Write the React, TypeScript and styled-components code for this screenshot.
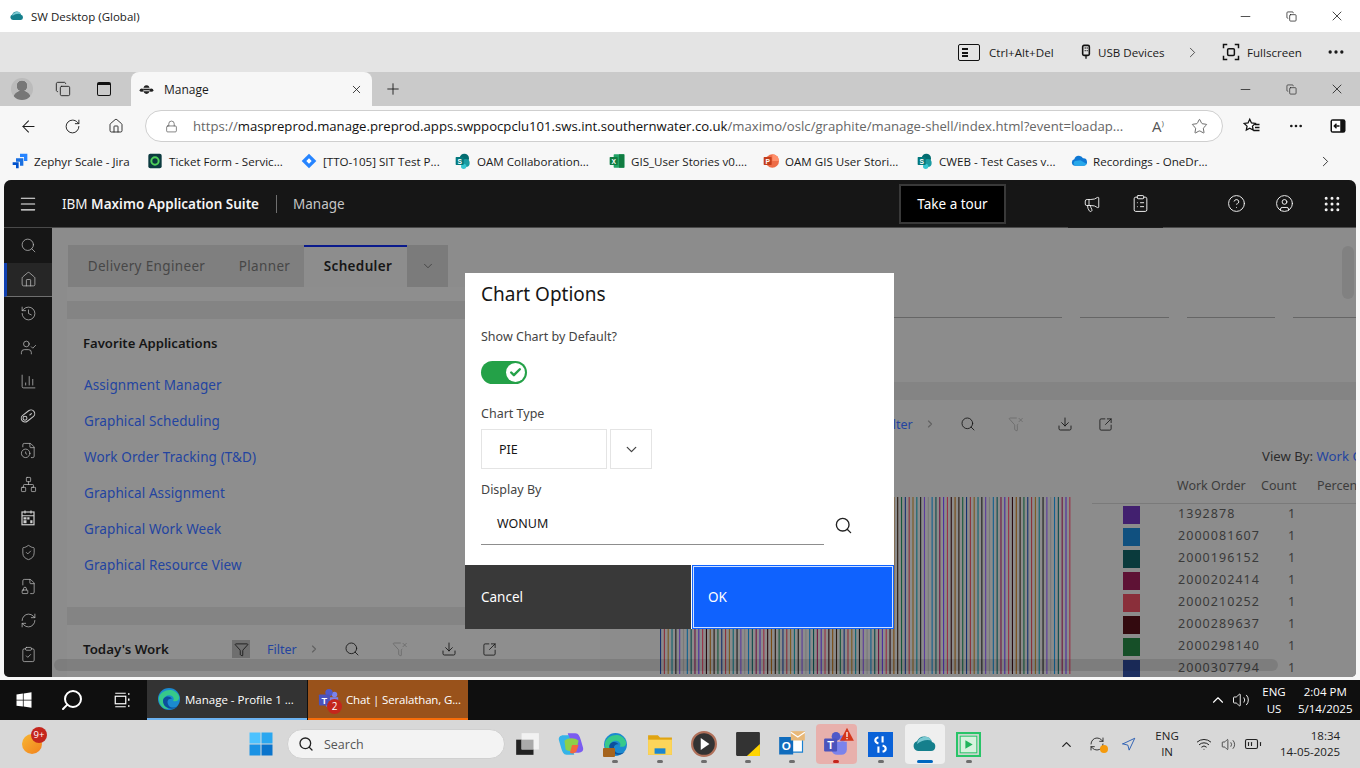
import type { ReactNode } from "react";
import styled, { createGlobalStyle } from "styled-components";
import {
	ArrowLeft,
	BatteryMedium,
	ChartColumn,
	Check,
	ChevronDown,
	ChevronRight,
	ChevronUp,
	CircleHelp,
	CircleUser,
	ClipboardCheck,
	ClipboardList,
	Copy,
	Download,
	Ellipsis,
	FileClock,
	FileLock2,
	Funnel,
	FunnelX,
	Grip,
	History,
	House,
	Lock,
	Megaphone,
	Menu,
	Minus,
	Navigation,
	Network,
	Plus,
	RefreshCw,
	RotateCw,
	Search,
	ShieldCheck,
	SquareArrowOutUpRight,
	Star,
	UserCheck,
	Volume2,
	Wifi,
	X,
} from "lucide-react";

const GlobalStyle = createGlobalStyle`
	html, body {
		margin: 0;
		padding: 0;
		background: #fff;
	}
	* {
		box-sizing: border-box;
	}
`;

const plex = `"Noto Sans", "Open Sans", sans-serif`;
const segoe = `"Open Sans", "Noto Sans", sans-serif`;

const favorites = [
	"Assignment Manager",
	"Graphical Scheduling",
	"Work Order Tracking (T&D)",
	"Graphical Assignment",
	"Graphical Work Week",
	"Graphical Resource View",
];

const legend = [
	{ id: "1392878", color: "#42206f" },
	{ id: "2000081607", color: "#10507f" },
	{ id: "2000196152", color: "#0a3a3c" },
	{ id: "2000202414", color: "#5e1235" },
	{ id: "2000210252", color: "#8a2f3a" },
	{ id: "2000289637", color: "#330a0f" },
	{ id: "2000298140", color: "#164f28" },
	{ id: "2000307794", color: "#1c2e60" },
];

const barColors = ["#2a1a10", "#14573a", "#16306e", "#8a2f3a", "#7a5a20", "#0e6470", "#1b1b1b", "#5b3a9c", "#7a7a7a", "#11608f", "#0a4a4a", "#6e1640", "#4a2aa0", "#9a2f45", "#2a0a0f", "#7a4a10"];

function Logo({ children, size = 16 }: { children: ReactNode; size?: number }) {
	return (
		<svg width={size} height={size} viewBox="0 0 24 24">
			{children}
		</svg>
	);
}

const ZephyrIcon = () => (
	<Logo>
		<path d="M12 1h11v11h-5V6h-6z" fill="#2684ff" />
		<path d="M6 8h11v11h-5v-6H6z" fill="#1a6fe0" />
		<path d="M1 14h9v9H6v-5H1z" fill="#0052cc" />
	</Logo>
);

const TicketIcon = () => (
	<Logo>
		<rect x="2" y="1" width="20" height="22" rx="3" fill="#0b3a3f" />
		<circle cx="12" cy="12" r="5.5" fill="none" stroke="#4fd05a" strokeWidth="3" />
	</Logo>
);

const JiraIcon = () => (
	<Logo>
		<path d="M12 1l11 11-11 11L1 12z" fill="#2684ff" />
		<path d="M12 8l4 4-4 4-4-4z" fill="#fff" />
	</Logo>
);

const SharePointIcon = () => (
	<Logo>
		<circle cx="14" cy="8" r="7" fill="#036c70" />
		<circle cx="16" cy="15" r="6" fill="#1a9ba1" />
		<circle cx="13" cy="20" r="4" fill="#37c6d0" />
		<rect x="1" y="6" width="12" height="12" rx="1" fill="#03787c" />
		<text x="7" y="16" fontSize="10" fontWeight="700" fill="#fff" textAnchor="middle" fontFamily="Liberation Sans">
			S
		</text>
	</Logo>
);

const ExcelIcon = () => (
	<Logo>
		<rect x="7" y="2" width="16" height="20" rx="1" fill="#21a366" />
		<rect x="15" y="2" width="8" height="20" fill="#107c41" />
		<rect x="1" y="6" width="12" height="12" rx="1" fill="#107c41" />
		<text x="7" y="16" fontSize="10" fontWeight="700" fill="#fff" textAnchor="middle" fontFamily="Liberation Sans">
			X
		</text>
	</Logo>
);

const PowerPointIcon = () => (
	<Logo>
		<circle cx="14" cy="12" r="10" fill="#ed6c47" />
		<path d="M14 2a10 10 0 0110 10H14z" fill="#ff8f6b" />
		<rect x="1" y="6" width="12" height="12" rx="1" fill="#c43e1c" />
		<text x="7" y="16" fontSize="10" fontWeight="700" fill="#fff" textAnchor="middle" fontFamily="Liberation Sans">
			P
		</text>
	</Logo>
);

const OneDriveIcon = () => (
	<Logo>
		<path d="M6 19a5 5 0 01-1-9.8A7 7 0 0118 8a5.5 5.5 0 011 11z" fill="#0f78d4" />
		<path d="M6 19a4 4 0 010-7l8-1 9 5a3.5 3.5 0 01-4 3z" fill="#28a8ea" />
	</Logo>
);

const CloudIcon = ({ size = 16 }: { size?: number }) => (
	<Logo size={size}>
		<path d="M5 19a5 5 0 01-1-9.7A8 8 0 0119 10a4.6 4.6 0 01-1 9z" fill="#157f8c" />
		<path d="M4 12a8 8 0 0115-3c-4-2-10-1-15 3z" fill="#7bc9d2" />
	</Logo>
);

const BeeIcon = () => (
	<Logo size={15}>
		<ellipse cx="12" cy="12" rx="5" ry="7" fill="#222" />
		<ellipse cx="4.5" cy="13" rx="3.5" ry="2.5" fill="#222" />
		<ellipse cx="19.5" cy="13" rx="3.5" ry="2.5" fill="#222" />
		<path d="M7 10h10M7 14h10" stroke="#f5f5f5" strokeWidth="1.5" />
	</Logo>
);

const UsbPlugIcon = () => (
	<Logo size={16}>
		<rect x="7" y="2" width="10" height="15" rx="2" fill="none" stroke="#111" strokeWidth="2.4" />
		<path d="M10 6h1.5M13 6h1.5M10 10h1.5M13 10h1.5M12 17v5" stroke="#111" strokeWidth="2" />
	</Logo>
);

const FullscreenIcon = () => (
	<Logo size={18}>
		<path d="M2 7V2h5M17 2h5v5M22 17v5h-5M7 22H2v-5" fill="none" stroke="#111" strokeWidth="2" />
		<rect x="7.5" y="7.5" width="9" height="9" rx="1.5" fill="none" stroke="#111" strokeWidth="2" />
	</Logo>
);

const FavoritesIcon = () => (
	<Logo size={18}>
		<path d="M9 3l2.3 5 5.2.6-3.9 3.6 1 5.3L9 15l-4.6 2.5 1-5.3L1.5 8.6 6.7 8z" fill="#fff" stroke="#111" strokeWidth="1.7" />
		<path d="M16 10h6M16 14h6M14 18h8" stroke="#111" strokeWidth="1.7" />
	</Logo>
);

const SplitIcon = () => (
	<Logo size={18}>
		<rect x="2" y="3" width="20" height="18" rx="3" fill="#111" />
		<rect x="4" y="5" width="11" height="14" fill="#fff" />
		<path d="M14 12H7M10 9l-3 3 3 3" fill="none" stroke="#111" strokeWidth="1.8" />
	</Logo>
);

const WorkTagIcon = () => (
	<Logo size={18}>
		<rect x="2" y="7" width="20" height="10" rx="5" transform="rotate(-38 12 12)" fill="none" stroke="#c6c6c6" strokeWidth="1.4" />
		<circle cx="8" cy="15" r="2.6" fill="none" stroke="#c6c6c6" strokeWidth="1.4" />
		<path d="M14 11l3-2.4" stroke="#c6c6c6" strokeWidth="1.4" />
	</Logo>
);

const ScheduleIcon = () => (
	<Logo size={18}>
		<rect x="4" y="4" width="16" height="17" fill="none" stroke="#d0d0d0" strokeWidth="1.6" />
		<path d="M8 2v4M16 2v4M4 9h16" stroke="#d0d0d0" strokeWidth="1.6" />
		<path d="M6 11h4v3H6zM11 11h3v3h-3zM15 15h3v4h-3zM6 15h4v4H6z" fill="#d0d0d0" />
	</Logo>
);

const TaskViewIcon = () => (
	<Logo size={18}>
		<path d="M3 3h14M3 21h14" stroke="#fff" strokeWidth="1.6" />
		<rect x="3" y="7" width="14" height="10" fill="none" stroke="#fff" strokeWidth="1.6" />
		<path d="M20 3h2v2h-2zM20 10h2v3h-2zM20 19h2v2h-2z" fill="#fff" />
	</Logo>
);

const WindowsTenIcon = () => (
	<Logo size={18}>
		<path d="M2 4.5l8.5-1.2v8.2H2zM11.5 3.2L22 1.8v9.7H11.5zM2 12.5h8.5v8.2L2 19.5zM11.5 12.5H22v9.7l-10.5-1.4z" fill="#fff" />
	</Logo>
);

const WindowsElevenIcon = () => (
	<Logo size={24}>
		<rect x="0.5" y="0.5" width="11" height="11" fill="#4cc2ff" />
		<rect x="12.5" y="0.5" width="11" height="11" fill="#2aa7f0" />
		<rect x="0.5" y="12.5" width="11" height="11" fill="#1a92e4" />
		<rect x="12.5" y="12.5" width="11" height="11" fill="#0a74cc" />
	</Logo>
);

const EdgeIcon = ({ size = 24 }: { size?: number }) => (
	<Logo size={size}>
		<circle cx="12" cy="12" r="11" fill="#1b8ad0" />
		<path d="M2 10C4 3 17-1 22 9c1 4-2 6-6 5 3-4-4-8-8-4-3 3-2 9 4 12C6 23 1 17 2 10z" fill="#36c98a" />
		<path d="M6 14c0-5 7-6 9-2-4-1-6 3-3 7 2 2 6 2 9 0-4 5-15 3-15-5z" fill="#0c4f9c" />
	</Logo>
);

const TeamsIcon = ({ size = 24 }: { size?: number }) => (
	<Logo size={size}>
		<circle cx="18" cy="7" r="3" fill="#7b83eb" />
		<circle cx="12" cy="5" r="4" fill="#5059c9" />
		<path d="M8 10h14v7a5 5 0 01-5 5h-4a5 5 0 01-5-5z" fill="#7b83eb" />
		<rect x="1" y="7" width="12" height="12" rx="1" fill="#4b53bc" />
		<text x="7" y="17" fontSize="10" fontWeight="700" fill="#fff" textAnchor="middle" fontFamily="Liberation Sans">
			T
		</text>
	</Logo>
);

type PinnedApp = { key: string; node: ReactNode; state?: "alert" | "active"; dot?: boolean };

const getPinnedApps = (): PinnedApp[] => [
	{
		key: "desktops",
		node: (
			<Logo size={26}>
				<rect x="2" y="8" width="16" height="14" fill="#222" />
				<rect x="7" y="2" width="16" height="15" fill="#f2f2f2" />
				<rect x="7" y="8" width="11" height="9" fill="#aaa" />
			</Logo>
		),
	},
	{
		key: "copilot",
		node: (
			<Logo size={26}>
				<path d="M9 2h7c3 0 4 3 5 6l2 7c1 3-1 5-4 5h-5z" fill="#7b5cf0" />
				<path d="M15 22H8c-3 0-4-3-5-6L1 9c-1-3 1-5 4-5h5z" fill="#35b4e8" />
				<path d="M6 9c4-3 9-3 13 0l-2 8c-3 2-7 2-10 0z" fill="#8cd04a" />
				<path d="M13 13h6l-2 6c-2 2-4 2-6 1z" fill="#f2683c" />
			</Logo>
		),
	},
	{
		key: "edge",
		node: (
			<Wrap>
				<EdgeIcon size={25} />
				<Briefcase />
			</Wrap>
		),
		dot: true,
	},
	{
		key: "files",
		node: (
			<Logo size={26}>
				<path d="M1 4h9l2 2h11v16H1z" fill="#e0a412" />
				<rect x="1" y="8" width="22" height="14" fill="#fcd55a" />
				<rect x="7" y="16" width="10" height="5" fill="#1a86d0" />
			</Logo>
		),
		dot: true,
	},
	{
		key: "player",
		node: (
			<Logo size={26}>
				<circle cx="12" cy="12" r="11" fill="#333" stroke="#b0705a" strokeWidth="2" />
				<path d="M9 6.5l8 5.5-8 5.5z" fill="#fff" />
			</Logo>
		),
		dot: true,
	},
	{
		key: "notes",
		node: (
			<Logo size={26}>
				<rect x="1" y="1" width="22" height="22" rx="1" fill="#333" />
				<path d="M11 23l12-11v11z" fill="#ffd400" />
			</Logo>
		),
		dot: true,
	},
	{
		key: "outlook",
		node: (
			<Logo size={28}>
				<path d="M8 7h13v12H8z" fill="#fff" stroke="#1a80d0" />
				<rect x="1" y="6" width="12" height="15" fill="#0f6cbd" />
				<text x="7" y="17" fontSize="10" fontWeight="700" fill="#fff" textAnchor="middle" fontFamily="Liberation Sans">
					O
				</text>
				<path d="M11 1h12v8H11z" fill="#e8b878" />
				<path d="M11 2l6 4 6-4" fill="none" stroke="#fff" />
			</Logo>
		),
		dot: true,
	},
	{
		key: "teams",
		node: (
			<Wrap>
				<TeamsIcon size={26} />
				<AlertMark viewBox="0 0 24 24" width={16} height={15}>
					<path d="M12 1l11 21H1z" fill="#d4361a" />
					<path d="M11 8h2v8h-2zM11 17.5h2v2h-2z" fill="#fff" />
				</AlertMark>
			</Wrap>
		),
		state: "alert",
	},
	{
		key: "sw",
		node: (
			<Logo size={25}>
				<rect width="24" height="24" fill="#0a62d8" />
				<path d="M10 5c-4 1-4 5 0 6M14 19c4-1 4-5 0-6M14 4v6M10 14v6" fill="none" stroke="#fff" strokeWidth="2" />
			</Logo>
		),
		dot: true,
	},
	{ key: "cloud", node: <CloudIcon size={24} />, state: "active" },
	{
		key: "viewer",
		node: (
			<Logo size={25}>
				<rect x="1" y="1" width="22" height="22" fill="none" stroke="#28c468" strokeWidth="2" />
				<rect x="4" y="4" width="16" height="16" fill="#d6f2de" stroke="#28c468" />
				<path d="M9 8l7 4-7 4z" fill="#20b45c" />
			</Logo>
		),
		dot: true,
	},
];

function CardToolbar({ title, pad }: { title?: string; pad: number }) {
	return (
		<ToolRow $pad={pad}>
			<CardTitle>{title}</CardTitle>
			<FilterBox>
				<Funnel size={15} strokeWidth={1.3} color="#111" />
			</FilterBox>
			<FilterLink>Filter</FilterLink>
			<ToolSlot $w={34}>
				<ChevronRight size={12} strokeWidth={2.2} color="#616161" />
			</ToolSlot>
			<ToolSlot $w={42}>
				<Search size={16} strokeWidth={1.3} color="#161616" />
			</ToolSlot>
			<ToolSlot $w={54}>
				<FunnelX size={16} strokeWidth={1.1} color="#666" />
			</ToolSlot>
			<ToolSlot $w={44}>
				<Download size={16} strokeWidth={1.3} color="#161616" />
			</ToolSlot>
			<ToolSlot $w={36}>
				<SquareArrowOutUpRight size={15} strokeWidth={1.3} color="#161616" />
			</ToolSlot>
		</ToolRow>
	);
}

export default function App() {
	return (
		<Screen>
			<GlobalStyle />
			<TitleBar>
				<TitleLeft>
					<CloudIcon size={14} />
					<span>SW Desktop (Global)</span>
				</TitleLeft>
				<WindowButtons>
					<WindowButton><Minus size={15} strokeWidth={1.2} /></WindowButton>
					<WindowButton><Copy size={11} strokeWidth={1.6} /></WindowButton>
					<WindowButton><X size={16} strokeWidth={1.2} /></WindowButton>
				</WindowButtons>
			</TitleBar>

			<RemoteBar>
				<RemoteItem $w={120} $gap={9}>
					<KeyboardBox>
						<KeyDots />
					</KeyboardBox>
					<span>Ctrl+Alt+Del</span>
				</RemoteItem>
				<RemoteItem $w={96} $gap={4}>
					<UsbPlugIcon />
					<span>USB Devices</span>
				</RemoteItem>
				<RemoteChevron>
					<ChevronRight size={17} strokeWidth={1} />
				</RemoteChevron>
				<RemoteItem $w={80} $gap={7}>
					<FullscreenIcon />
					<span>Fullscreen</span>
				</RemoteItem>
				<RemoteMore>
					<Ellipsis size={20} strokeWidth={2} />
				</RemoteMore>
			</RemoteBar>

			<TabStrip>
				<StripIcon $w={44}>
					<Avatar />
				</StripIcon>
				<StripIcon $w={38}>
					<Copy size={16} strokeWidth={1.3} />
				</StripIcon>
				<StripIcon $w={44}>
					<TabBoxIcon />
				</StripIcon>
				<ActiveTab>
					<BeeIcon />
					<TabLabel>Manage</TabLabel>
					<X size={13} strokeWidth={1.5} />
				</ActiveTab>
				<NewTab>
					<Plus size={18} strokeWidth={1.2} />
				</NewTab>
				<WindowButtons>
					<WindowButton><Minus size={15} strokeWidth={1.2} /></WindowButton>
					<WindowButton><Copy size={11} strokeWidth={1.4} /></WindowButton>
					<WindowButton><X size={16} strokeWidth={1.2} /></WindowButton>
				</WindowButtons>
			</TabStrip>

			<AddressBar>
				<NavButton $w={44}><ArrowLeft size={19} strokeWidth={1.3} /></NavButton>
				<NavButton $w={44}><RotateCw size={17} strokeWidth={1.3} /></NavButton>
				<NavButton $w={44}><House size={16} strokeWidth={1.3} /></NavButton>
				<UrlPill>
					<Lock size={13} strokeWidth={1.2} color="#444" />
					<UrlText>
						<Muted>https://</Muted>maspreprod.manage.preprod.apps.swppocpclu101.sws.int.southernwater.co.uk<Muted>/maximo/oslc/graphite/manage-shell/index.html?event=loadap...</Muted>
					</UrlText>
					<ReadAloud>A<sup>)</sup></ReadAloud>
					<PillStar>
						<Star size={17} strokeWidth={1.1} color="#444" />
					</PillStar>
				</UrlPill>
				<EndTools>
					<NavButton $w={44}><FavoritesIcon /></NavButton>
					<NavButton $w={44}><Ellipsis size={16} strokeWidth={2} /></NavButton>
					<NavButton $w={40}><SplitIcon /></NavButton>
				</EndTools>
			</AddressBar>

			<FavBar>
				<FavItem $w={135}><ZephyrIcon /><FavText>Zephyr Scale - Jira</FavText></FavItem>
				<FavItem $w={154}><TicketIcon /><FavText>Ticket Form - Servic...</FavText></FavItem>
				<FavItem $w={154}><JiraIcon /><FavText>[TTO-105] SIT Test P...</FavText></FavItem>
				<FavItem $w={154}><SharePointIcon /><FavText>OAM Collaboration...</FavText></FavItem>
				<FavItem $w={154}><ExcelIcon /><FavText>GIS_User Stories v0....</FavText></FavItem>
				<FavItem $w={154}><PowerPointIcon /><FavText>OAM GIS User Stori...</FavText></FavItem>
				<FavItem $w={154}><SharePointIcon /><FavText>CWEB - Test Cases v...</FavText></FavItem>
				<FavItem $w={246}><OneDriveIcon /><FavText>Recordings - OneDr...</FavText></FavItem>
				<ChevronRight size={17} strokeWidth={1.2} />
			</FavBar>

			<WindowFrame>
				<MaximoWindow>
					<Header>
						<HeaderMenu>
							<Menu size={20} strokeWidth={1.3} />
						</HeaderMenu>
						<Brand>
							IBM <b>Maximo Application Suite</b>
						</Brand>
						<BrandDivider />
						<AppName>Manage</AppName>
						<HeaderSpacer />
						<TourButton>Take a tour</TourButton>
						<HeaderIcon $first><Megaphone size={18} strokeWidth={1.2} /></HeaderIcon>
						<HeaderIcon><ClipboardList size={19} strokeWidth={1.2} /></HeaderIcon>
						<HeaderIcon $gap><CircleHelp size={19} strokeWidth={1.2} /></HeaderIcon>
						<HeaderIcon><CircleUser size={19} strokeWidth={1.2} /></HeaderIcon>
						<HeaderIcon><Grip size={20} strokeWidth={1.6} /></HeaderIcon>
						<HeaderLip />
					</Header>

					<Body>
						<SideNav>
							<NavItem><Search size={17} strokeWidth={1} /></NavItem>
							<NavItem $active><House size={17} strokeWidth={1} /></NavItem>
							<NavItem><History size={17} strokeWidth={1} /></NavItem>
							<NavItem><UserCheck size={17} strokeWidth={1} /></NavItem>
							<NavItem><ChartColumn size={17} strokeWidth={1} /></NavItem>
							<NavItem><WorkTagIcon /></NavItem>
							<NavItem><FileClock size={17} strokeWidth={1} /></NavItem>
							<NavItem><Network size={17} strokeWidth={1} /></NavItem>
							<NavItem><ScheduleIcon /></NavItem>
							<NavItem><ShieldCheck size={17} strokeWidth={1} /></NavItem>
							<NavItem><FileLock2 size={17} strokeWidth={1} /></NavItem>
							<NavItem><RefreshCw size={17} strokeWidth={1} /></NavItem>
							<NavItem><ClipboardCheck size={17} strokeWidth={1} /></NavItem>
						</SideNav>

						<Content>
							<LeftColumn>
								<RoleTabs>
									<RoleTab $w={156}>Delivery Engineer</RoleTab>
									<RoleTab $w={80}>Planner</RoleTab>
									<RoleTab $w={103} $active>Scheduler</RoleTab>
									<RoleMore>
										<ChevronDown size={14} strokeWidth={1} />
									</RoleMore>
								</RoleTabs>
								<TabFoot />
								<Band />
								<Card $h={288}>
									<FavHeading>Favorite Applications</FavHeading>
									{favorites.map((name) => (
										<FavLink key={name}>{name}</FavLink>
									))}
								</Card>
								<Band />
								<Card $h={70}>
									<CardToolbar title="Today's Work" pad={0} />
								</Card>
							</LeftColumn>

							<RightColumn>
								<FilterLines>
									<FilterLine $w={447} />
									<FilterLine $w={89} />
									<FilterLine $w={88} />
									<FilterLine $w={63} />
								</FilterLines>
								<Band />
								<WideCard>
									<CardToolbar pad={84} />
									<ViewBy>
										View By: <a>Work Order</a>
									</ViewBy>
									<ChartRow>
										<svg width={411} height={177}>
											{Array.from({ length: 108 }, (_, i) => (
												<rect key={i} x={i * 3.825} y={0} width={1.1} height={177} fill={barColors[(i + 2) % barColors.length]} />
											))}
										</svg>
										<Legend>
											<LegendHead>
												<HeadCell $w={84}>Work Order</HeadCell>
												<HeadCell $w={56}>Count</HeadCell>
												<HeadCell $w={60}>Percentage</HeadCell>
											</LegendHead>
											{legend.map((row) => (
												<LegendRow key={row.id}>
													<Swatch style={{ background: row.color }} />
													<LegendId>{row.id}</LegendId>
													<LegendCount>1</LegendCount>
												</LegendRow>
											))}
										</Legend>
									</ChartRow>
								</WideCard>
							</RightColumn>

							<VScroll />
							<HScroll />
						</Content>
					</Body>

					<Modal>
						<ModalBody>
							<ModalTitle>Chart Options</ModalTitle>
							<FieldLabel $top={23}>Show Chart by Default?</FieldLabel>
							<Toggle>
								<ToggleKnob>
									<Check size={13} strokeWidth={4.5} color="#24a148" />
								</ToggleKnob>
							</Toggle>
							<FieldLabel $top={22}>Chart Type</FieldLabel>
							<SelectRow>
								<SelectValue>PIE</SelectValue>
								<SelectArrow>
									<ChevronDown size={17} strokeWidth={1.8} color="#444" />
								</SelectArrow>
							</SelectRow>
							<FieldLabel $top={13}>Display By</FieldLabel>
							<LookupRow>
								<LookupInput>WONUM</LookupInput>
								<LookupIcon size={19} strokeWidth={1.7} color="#222" />
							</LookupRow>
						</ModalBody>
						<ModalFooter>
							<CancelButton>Cancel</CancelButton>
							<OkButton>OK</OkButton>
						</ModalFooter>
					</Modal>
				</MaximoWindow>
			</WindowFrame>

			<RemoteTaskbar>
				<TaskSlot $w={48}><WindowsTenIcon /></TaskSlot>
				<TaskSlot $w={48}><Search size={24} strokeWidth={2} color="#fff" style={{ transform: "scaleX(-1)" }} /></TaskSlot>
				<TaskSlot $w={51}><TaskViewIcon /></TaskSlot>
				<TaskApp $bg="#333333" $line="#6cb2f0">
					<EdgeIcon size={24} />
					<span>Manage - Profile 1 ...</span>
				</TaskApp>
				<TaskApp $bg="#99521b" $line="#f76d0a">
					<Wrap>
						<TeamsIcon size={22} />
						<TeamsBadge>2</TeamsBadge>
					</Wrap>
					<TaskChatLabel>Chat | Seralathan, G...</TaskChatLabel>
				</TaskApp>
				<RemoteTray>
					<ChevronUp size={18} strokeWidth={1.5} />
					<Volume2 size={18} strokeWidth={1.2} />
					<TrayLang>ENG<br />US</TrayLang>
					<TrayClock>2:04 PM<br />5/14/2025</TrayClock>
				</RemoteTray>
			</RemoteTaskbar>

			<LocalTaskbar>
				<WidgetSlot>
					<WidgetDot />
					<WidgetBadge>9+</WidgetBadge>
				</WidgetSlot>
				<WindowsElevenIcon />
				<SearchPill>
					<Search size={16} strokeWidth={2} color="#222" />
					<span>Search</span>
				</SearchPill>
				<PinnedRow>
					{getPinnedApps().map((app) => (
						<PinnedSlot key={app.key} $state={app.state}>
							{app.node}
							{app.dot && <PinDot />}
							{app.state === "alert" && <PinDot $red />}
							{app.state === "active" && <ActiveBar />}
						</PinnedSlot>
					))}
				</PinnedRow>
				<LocalTray>
					<TrayIcon $w={28}><ChevronUp size={15} strokeWidth={2} color="#222" /></TrayIcon>
					<TrayIcon $w={34}>
						<Wrap>
							<RefreshCw size={16} strokeWidth={1.3} color="#222" />
							<SyncDot />
						</Wrap>
					</TrayIcon>
					<TrayIcon $w={28}><Navigation size={15} strokeWidth={1.4} color="#1d55b0" /></TrayIcon>
					<LocalLang>ENG<br />IN</LocalLang>
					<TrayIcon $w={24}><Wifi size={16} strokeWidth={1.5} color="#222" /></TrayIcon>
					<TrayIcon $w={24}><Volume2 size={15} strokeWidth={1.2} color="#222" /></TrayIcon>
					<TrayIcon $w={26}><BatteryMedium size={18} strokeWidth={1.5} color="#222" /></TrayIcon>
					<LocalClock>18:34<br />14-05-2025</LocalClock>
				</LocalTray>
			</LocalTaskbar>
		</Screen>
	);
}

const Screen = styled.div`
	width: 1360px;
	height: 768px;
	overflow: hidden;
	display: flex;
	flex-direction: column;
	background: #fff;
	font-family: ${segoe};
	font-size: 12px;
	color: #1a1a1a;
`;

const TitleBar = styled.div`
	height: 32px;
	display: flex;
	align-items: center;
	justify-content: space-between;
	background: #fff;
`;

const TitleLeft = styled.div`
	display: flex;
	align-items: center;
	gap: 7px;
	padding-left: 10px;
	font-size: 11.5px;
`;

const WindowButtons = styled.div`
	display: flex;
	margin-left: auto;
`;

const WindowButton = styled.div`
	width: 46px;
	height: 32px;
	display: flex;
	align-items: center;
	justify-content: center;
`;

const RemoteBar = styled.div`
	height: 40px;
	padding-left: 958px;
	display: flex;
	align-items: center;
	background: #e4e4e4;
	font-size: 11.6px;
`;

const RemoteItem = styled.div<{ $w: number; $gap: number }>`
	width: ${({ $w }) => $w}px;
	flex: none;
	display: flex;
	align-items: center;
	gap: ${({ $gap }) => $gap}px;
	white-space: nowrap;
`;

const KeyboardBox = styled.div`
	width: 22px;
	height: 17px;
	border: 1.5px solid #111;
	border-radius: 2px;
	padding: 3px;
	flex: none;
`;

const KeyDots = styled.div`
	width: 6px;
	height: 9px;
	background: repeating-linear-gradient(#111 0 2px, transparent 2px 3.5px);
`;

const RemoteChevron = styled.div`
	width: 48px;
	flex: none;
	padding-left: 10px;
	display: flex;
	align-items: center;
`;

const RemoteMore = styled.div`
	margin-left: 24px;
	display: flex;
`;

const TabStrip = styled.div`
	height: 34px;
	display: flex;
	align-items: center;
	background: #cacaca;
`;

const StripIcon = styled.div<{ $w: number }>`
	width: ${({ $w }) => $w}px;
	display: flex;
	justify-content: center;
`;

const Avatar = styled.div`
	width: 22px;
	height: 22px;
	border-radius: 50%;
	background:
		radial-gradient(circle at 50% 36%, #777 0 5px, transparent 5.5px),
		radial-gradient(circle at 50% 100%, #777 0 9px, transparent 9.5px),
		#bbb;
`;

const TabBoxIcon = styled.div`
	width: 14px;
	height: 14px;
	border: 1.5px solid #111;
	border-top-width: 3px;
	border-radius: 2px;
`;

const ActiveTab = styled.div`
	width: 241px;
	height: 34px;
	margin-left: 5px;
	padding: 0 9px 0 8px;
	display: flex;
	align-items: center;
	gap: 10px;
	background: #f7f7f7;
	border-radius: 8px 8px 0 0;
`;

const TabLabel = styled.span`
	flex: 1;
	font-size: 12px;
`;

const NewTab = styled.div`
	margin-left: 12px;
	display: flex;
`;

const AddressBar = styled.div`
	height: 40px;
	padding-left: 6px;
	display: flex;
	align-items: center;
	background: #f7f7f7;
`;

const NavButton = styled.div<{ $w: number }>`
	width: ${({ $w }) => $w}px;
	flex: none;
	display: flex;
	justify-content: center;
	align-items: center;
`;

const UrlPill = styled.div`
	width: 1078px;
	height: 32px;
	flex: none;
	margin-left: 7px;
	padding: 0 14px 0 19px;
	display: flex;
	align-items: center;
	background: #fff;
	border: 1px solid #cfcfcf;
	border-radius: 16px;
`;

const UrlText = styled.div`
	margin-left: 15px;
	width: 933px;
	flex: none;
	white-space: nowrap;
	overflow: hidden;
	font-size: 13.15px;
	color: #111;
`;

const Muted = styled.span`
	color: #666;
`;

const ReadAloud = styled.div`
	width: 46px;
	padding-left: 26px;
	flex: none;
	font-size: 15px;
	color: #555;
	sup {
		font-size: 8px;
	}
`;

const PillStar = styled.div`
	margin-left: 19px;
	display: flex;
`;

const EndTools = styled.div`
	display: flex;
	margin-left: 7px;
`;

const FavBar = styled.div`
	height: 30px;
	padding-left: 12px;
	display: flex;
	align-items: center;
	background: #f7f7f7;
`;

const FavItem = styled.div<{ $w: number }>`
	width: ${({ $w }) => $w}px;
	flex: none;
	display: flex;
	align-items: center;
	gap: 6px;
`;

const FavText = styled.span`
	font-size: 11.6px;
	white-space: nowrap;
`;

const WindowFrame = styled.div`
	height: 504px;
	padding: 4px 4px 3px;
	background: #f7f7f7;
`;

const MaximoWindow = styled.div`
	position: relative;
	height: 497px;
	display: flex;
	flex-direction: column;
	overflow: hidden;
	border-radius: 7px 7px 5px 5px;
	background: #8c8c8c;
	font-family: ${plex};
`;

const Header = styled.header`
	position: relative;
	height: 48px;
	flex: none;
	display: flex;
	align-items: center;
	background: #161616;
	border-bottom: 1px solid #4a4a4a;
	color: #f4f4f4;
`;

const HeaderLip = styled.div`
	position: absolute;
	left: 1064px;
	bottom: -1px;
	width: 95px;
	height: 1px;
	background: #1f1f1f;
`;

const HeaderMenu = styled.div`
	width: 48px;
	display: flex;
	justify-content: center;
`;

const Brand = styled.div`
	margin-left: 10px;
	font-size: 13.5px;
	white-space: nowrap;
	b {
		font-weight: 600;
	}
`;

const BrandDivider = styled.div`
	width: 1px;
	height: 18px;
	margin: 0 16px 0 17px;
	background: #6f6f6f;
`;

const AppName = styled.div`
	font-size: 13.5px;
	color: #c6c6c6;
`;

const HeaderSpacer = styled.div`
	flex: 1;
`;

const TourButton = styled.div`
	width: 107px;
	height: 40px;
	display: flex;
	align-items: center;
	justify-content: center;
	background: #000;
	border: 2px solid #393939;
	font-size: 13.5px;
	color: #fff;
`;

const HeaderIcon = styled.div<{ $first?: boolean; $gap?: boolean }>`
	width: 48px;
	display: flex;
	justify-content: center;
	margin-left: ${({ $first, $gap }) => ($first ? 62 : $gap ? 48 : 0)}px;
`;

const Body = styled.div`
	flex: 1;
	min-height: 0;
	display: flex;
`;

const SideNav = styled.nav`
	width: 48px;
	flex: none;
	padding-top: 1px;
	background: #161616;
	color: #c6c6c6;
`;

const NavItem = styled.div<{ $active?: boolean }>`
	height: 34.1px;
	display: flex;
	align-items: center;
	justify-content: center;
	background: ${({ $active }) => ($active ? "#262626" : "transparent")};
	border-left: 3px solid ${({ $active }) => ($active ? "#0f3fb0" : "transparent")};
	border-bottom: 1px solid ${({ $active }) => ($active ? "#6f6f6f" : "transparent")};
	padding-right: 3px;
`;

const Content = styled.main`
	position: relative;
	flex: 1;
	min-width: 0;
	padding-left: 15px;
	display: flex;
	gap: 15px;
	overflow: hidden;
	background: #8c8c8c;
`;

const LeftColumn = styled.div`
	width: 533px;
	flex: none;
	padding-top: 17px;
`;

const RoleTabs = styled.div`
	width: 380px;
	height: 42px;
	margin-left: 1px;
	display: flex;
	background: #7f7f7f;
	font-size: 13.5px;
	letter-spacing: 0.35px;
	color: #474747;
`;

const RoleTab = styled.div<{ $w: number; $active?: boolean }>`
	width: ${({ $w }) => $w}px;
	padding-bottom: 3px;
	padding-left: ${({ $active }) => ($active ? 5 : 1)}px;
	display: flex;
	align-items: center;
	justify-content: center;
	background: ${({ $active }) => ($active ? "#8d8d8d" : "transparent")};
	border-top: 2px solid ${({ $active }) => ($active ? "#0a1a8c" : "transparent")};
	color: ${({ $active }) => ($active ? "#161616" : "inherit")};
	font-weight: ${({ $active }) => ($active ? 600 : 400)};
`;

const RoleMore = styled.div`
	width: 41px;
	display: flex;
	align-items: center;
	justify-content: center;
	background: #7b7b7b;
	color: #222;
`;

const TabFoot = styled.div`
	height: 14px;
	background: #8e8e8e;
`;

const Band = styled.div`
	height: 18px;
	background: #848484;
`;

const Card = styled.section<{ $h: number }>`
	height: ${({ $h }) => $h}px;
	padding: 0 16px;
	background: #8e8e8e;
`;

const FavHeading = styled.h3`
	margin: 0;
	padding: 15px 0 15px;
	font-size: 13.1px;
	line-height: 18px;
	font-weight: 600;
	color: #161616;
`;

const FavLink = styled.a`
	display: block;
	height: 36px;
	padding-left: 1px;
	line-height: 36px;
	font-size: 13.5px;
	letter-spacing: 0.1px;
	color: #2344a0;
`;

const ToolRow = styled.div<{ $pad: number }>`
	height: 48px;
	margin-left: ${({ $pad }) => $pad}px;
	display: flex;
	align-items: center;
`;

const CardTitle = styled.div`
	width: 149px;
	font-size: 13.3px;
	font-weight: 600;
	color: #161616;
`;

const FilterBox = styled.div`
	width: 18px;
	height: 18px;
	display: flex;
	align-items: center;
	justify-content: center;
	background: #6f6f6f;
`;

const FilterLink = styled.span`
	margin-left: 17px;
	width: 30px;
	font-size: 12.5px;
	color: #2344a0;
`;

const ToolSlot = styled.div<{ $w: number }>`
	width: ${({ $w }) => $w}px;
	display: flex;
	justify-content: center;
`;

const RightColumn = styled.div`
	flex: 1;
	min-width: 0;
`;

const FilterLines = styled.div`
	height: 154px;
	padding-top: 89px;
	display: flex;
	gap: 18px;
`;

const FilterLine = styled.div<{ $w: number }>`
	width: ${({ $w }) => $w}px;
	height: 1px;
	flex: none;
	background: #666;
`;

const WideCard = styled.section`
	height: 300px;
	overflow: hidden;
	background: #8c8c8c;
`;

const ViewBy = styled.div`
	height: 22px;
	padding-left: 647px;
	font-size: 13.2px;
	line-height: 16px;
	white-space: nowrap;
	color: #2c2c2c;
	a {
		color: #2344a0;
	}
`;

const ChartRow = styled.div`
	padding: 27px 0 0 45px;
	display: flex;
	gap: 21px;
	align-items: flex-start;
	svg {
		flex: none;
	}
`;

const Legend = styled.div`
	margin-top: -27px;
	width: 300px;
	flex: none;
`;

const LegendHead = styled.div`
	height: 34px;
	margin-bottom: 1px;
	padding: 7px 0 0 85px;
	display: flex;
	border-bottom: 1px solid #7a7a7a;
	font-size: 12.5px;
	color: #3c3c3c;
	white-space: nowrap;
`;

const HeadCell = styled.div<{ $w: number }>`
	width: ${({ $w }) => $w}px;
	flex: none;
`;

const LegendRow = styled.div`
	height: 22px;
	padding-left: 31px;
	display: flex;
	font-size: 12.5px;
	line-height: 18px;
	letter-spacing: 1.05px;
	color: #3a3a3a;
`;

const Swatch = styled.div`
	width: 17px;
	height: 18px;
	margin-top: 1px;
	flex: none;
`;

const LegendId = styled.div`
	width: 110px;
	margin-left: 38px;
	flex: none;
`;

const LegendCount = styled.div``;

const VScroll = styled.div`
	position: absolute;
	top: 18px;
	right: 2px;
	width: 12px;
	height: 53px;
	border-radius: 6px;
	background: rgba(0, 0, 0, 0.08);
`;

const HScroll = styled.div`
	position: absolute;
	left: 2px;
	bottom: 6px;
	width: 1224px;
	height: 12px;
	border-radius: 6px;
	background: rgba(0, 0, 0, 0.1);
`;

const Modal = styled.div`
	position: absolute;
	top: 93px;
	left: 461px;
	width: 429px;
	height: 356px;
	display: flex;
	flex-direction: column;
	background: #fff;
`;

const ModalBody = styled.div`
	flex: 1;
	padding: 9px 16px 0;
`;

const ModalTitle = styled.h2`
	margin: 0;
	font-size: 19px;
	line-height: 24px;
	font-weight: 400;
	color: #161616;
`;

const FieldLabel = styled.div<{ $top: number }>`
	margin-top: ${({ $top }) => $top}px;
	font-size: 12.5px;
	line-height: 16px;
	color: #444;
`;

const Toggle = styled.div`
	width: 46px;
	height: 23px;
	margin-top: 16px;
	padding-right: 2px;
	display: flex;
	align-items: center;
	justify-content: flex-end;
	border-radius: 12px;
	background: #24a148;
`;

const ToggleKnob = styled.div`
	width: 19px;
	height: 19px;
	display: flex;
	align-items: center;
	justify-content: center;
	border-radius: 50%;
	background: #fff;
`;

const SelectRow = styled.div`
	width: 171px;
	height: 40px;
	margin-top: 7px;
	display: flex;
`;

const SelectValue = styled.div`
	width: 126px;
	padding-left: 17px;
	display: flex;
	align-items: center;
	border: 1px solid #e4e4e4;
	font-size: 12.5px;
	color: #161616;
`;

const SelectArrow = styled.div`
	width: 42px;
	margin-left: 3px;
	display: flex;
	align-items: center;
	justify-content: center;
	border: 1px solid #e4e4e4;
`;

const LookupRow = styled.div`
	margin-top: 12px;
	display: flex;
	align-items: center;
	gap: 10px;
`;

const LookupInput = styled.div`
	width: 343px;
	height: 35px;
	padding: 0 0 8px 16px;
	display: flex;
	align-items: center;
	border-bottom: 1px solid #8d8d8d;
	font-size: 12.5px;
	color: #161616;
`;

const LookupIcon = styled(Search)`
	margin-bottom: 4px;
`;

const ModalFooter = styled.div`
	height: 64px;
	flex: none;
	display: flex;
	font-size: 13.5px;
	color: #fff;
`;

const CancelButton = styled.div`
	width: 226px;
	padding-left: 16px;
	display: flex;
	align-items: center;
	background: #393939;
`;

const OkButton = styled.div`
	flex: 1;
	padding-left: 16px;
	display: flex;
	align-items: center;
	background: #0f62fe;
	box-shadow: inset 0 0 0 1px #0f62fe, inset 0 0 0 2px #cfe0ff;
	margin-left: 1px;
`;

const RemoteTaskbar = styled.div`
	height: 40px;
	display: flex;
	background: #0f0f0f;
	color: #fff;
`;

const TaskSlot = styled.div<{ $w: number }>`
	width: ${({ $w }) => $w}px;
	display: flex;
	align-items: center;
	justify-content: center;
`;

const TaskApp = styled.div<{ $bg: string; $line: string }>`
	width: 160px;
	margin-right: 1px;
	padding-left: 10px;
	display: flex;
	align-items: center;
	gap: 4px;
	background: ${({ $bg }) => $bg};
	border-bottom: 2px solid ${({ $line }) => $line};
	font-size: 11.5px;
	white-space: nowrap;
`;

const TaskChatLabel = styled.span`
	margin-left: 2px;
	letter-spacing: -0.15px;
`;

const Wrap = styled.div`
	position: relative;
	display: flex;
`;

const Briefcase = styled.div`
	position: absolute;
	left: 0;
	bottom: 0;
	width: 12px;
	height: 9px;
	background: #a5641e;
	border-radius: 1px;
`;

const AlertMark = styled.svg`
	position: absolute;
	top: -4px;
	right: -6px;
`;

const TeamsBadge = styled.div`
	position: absolute;
	right: -2px;
	bottom: -4px;
	width: 15px;
	height: 15px;
	border-radius: 50%;
	background: #c4261d;
	font-size: 10px;
	line-height: 15px;
	text-align: center;
	color: #fff;
`;

const RemoteTray = styled.div`
	margin-left: auto;
	width: 151px;
	display: flex;
	align-items: center;
	gap: 5px;
`;

const TrayLang = styled.div`
	width: 28px;
	margin-left: 5px;
	font-size: 11.5px;
	line-height: 17px;
	text-align: center;
`;

const TrayClock = styled.div`
	margin-left: 5px;
	font-size: 11.5px;
	line-height: 17px;
	text-align: center;
	white-space: nowrap;
`;

const LocalTaskbar = styled.div`
	height: 48px;
	display: flex;
	align-items: center;
	background: #d8d8d8;
	svg {
		flex: none;
	}
`;

const WidgetSlot = styled.div`
	position: relative;
	width: 249px;
	height: 48px;
	flex: none;
`;

const WidgetDot = styled.div`
	position: absolute;
	top: 14px;
	left: 22px;
	width: 20px;
	height: 20px;
	border-radius: 50%;
	background: linear-gradient(135deg, #f7b733, #f2801c);
`;

const WidgetBadge = styled.div`
	position: absolute;
	top: 7px;
	left: 31px;
	width: 16px;
	height: 16px;
	border-radius: 50%;
	background: #c4261d;
	font-size: 9.5px;
	line-height: 16px;
	text-align: center;
	color: #fff;
`;

const SearchPill = styled.div`
	width: 218px;
	height: 30px;
	flex: none;
	margin-left: 14px;
	padding-left: 10px;
	display: flex;
	align-items: center;
	gap: 10px;
	background: #f3f3f3;
	border: 1px solid #d0d0d0;
	border-radius: 15px;
	font-size: 12.5px;
	color: #555;
`;

const PinnedRow = styled.div`
	display: grid;
	grid-template-columns: repeat(11, 44.2px);
	height: 48px;
	flex: none;
`;

const PinnedSlot = styled.div<{ $state?: "alert" | "active" }>`
	position: relative;
	display: flex;
	align-items: center;
	justify-content: center;
	margin: ${({ $state }) => ($state ? "4px 2px" : 0)};
	border-radius: 4px;
	background: ${({ $state }) => ($state === "alert" ? "#e8b0ac" : $state === "active" ? "#efefef" : "transparent")};
`;

const PinDot = styled.div<{ $red?: boolean }>`
	position: absolute;
	left: 50%;
	bottom: ${({ $red }) => ($red ? 1 : 5)}px;
	width: 6px;
	height: 3px;
	margin-left: -3px;
	border-radius: 2px;
	background: ${({ $red }) => ($red ? "#c4261d" : "#6e6e6e")};
`;

const ActiveBar = styled.div`
	position: absolute;
	left: 50%;
	bottom: 1px;
	width: 16px;
	height: 3px;
	margin-left: -8px;
	border-radius: 2px;
	background: #0067c0;
`;

const LocalTray = styled.div`
	margin-left: 61px;
	display: flex;
	align-items: center;
	color: #222;
`;

const TrayIcon = styled.div<{ $w: number }>`
	width: ${({ $w }) => $w}px;
	flex: none;
	display: flex;
	justify-content: center;
`;

const SyncDot = styled.div`
	position: absolute;
	right: -3px;
	bottom: -1px;
	width: 8px;
	height: 8px;
	border-radius: 50%;
	background: #f59a0c;
`;

const LocalLang = styled.div`
	width: 50px;
	flex: none;
	font-size: 11.5px;
	line-height: 16px;
	text-align: center;
`;

const LocalClock = styled.div`
	width: 70px;
	flex: none;
	margin-left: 4px;
	font-size: 11.5px;
	line-height: 16px;
	text-align: right;
	white-space: nowrap;
`;
